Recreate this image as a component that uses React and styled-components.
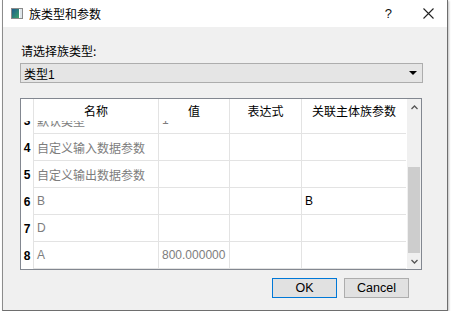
import React from 'react';
import styled, { createGlobalStyle } from 'styled-components';

const GlobalStyle = createGlobalStyle`
    body {
        margin: 0;
        background: #fff;
        font-family: "Liberation Sans", "Noto Sans CJK SC", sans-serif;
    }
`;

const columns = [
    { key: 'name', title: '名称', width: 125 },
    { key: 'value', title: '值', width: 71 },
    { key: 'expr', title: '表达式', width: 72 },
    { key: 'assoc', title: '关联主体族参数', width: 104 },
];

const rows = [
    { num: 3, name: '默认类型', value: '1', partial: true },
    { num: 4, name: '自定义输入数据参数' },
    { num: 5, name: '自定义输出数据参数' },
    { num: 6, name: 'B', assoc: 'B' },
    { num: 7, name: 'D' },
    { num: 8, name: 'A', value: '800.000000' },
];

const TitleIcon = () => (
    <svg width="12" height="11" viewBox="0 0 12 11">
        <defs>
            <linearGradient id="ti" x1="0" y1="0" x2="1" y2="1">
                <stop offset="0" stopColor="#1d5a8c" />
                <stop offset="1" stopColor="#3aa36a" />
            </linearGradient>
        </defs>
        <rect x="0.5" y="0.5" width="11" height="10" fill="#fff" stroke="#8a8a8a" />
        <rect x="1" y="1" width="7" height="9" fill="url(#ti)" />
        <rect x="9" y="1" width="2" height="9" fill="#dfe6ea" />
    </svg>
);

const CloseIcon = () => (
    <svg width="11" height="11" viewBox="0 0 11 11">
        <path d="M0.5 0.5 L10.5 10.5 M10.5 0.5 L0.5 10.5" stroke="#222" strokeWidth="1.1" />
    </svg>
);

const Chevron = ({ down }) => (
    <svg width="7" height="5" viewBox="0 0 7 5">
        <path d={down ? 'M0.5 1 L3.5 4 L6.5 1' : 'M0.5 4 L3.5 1 L6.5 4'} stroke="#555" strokeWidth="1.3" fill="none" />
    </svg>
);

const App = () => {
    return (
        <>
            <GlobalStyle />
            <Window>
                <TitleBar>
                    <TitleIcon />
                    <Title>族类型和参数</Title>
                    <Help>?</Help>
                    <Close><CloseIcon /></Close>
                </TitleBar>
                <Body>
                    <Label>请选择族类型:</Label>
                    <Combo>
                        <span>类型1</span>
                        <Arrow />
                    </Combo>
                    <Table>
                        <TableMain>
                            <HeaderRow>
                                <Corner />
                                {columns.map(c => (
                                    <HeaderCell key={c.key} $w={c.width}>{c.title}</HeaderCell>
                                ))}
                            </HeaderRow>
                            <Rows>
                                {rows.map(r => (
                                    <Row key={r.num} $partial={r.partial}>
                                        <RowNum>{r.num}</RowNum>
                                        {columns.map(c => (
                                            <Cell key={c.key} $w={c.width} $dark={c.key === 'assoc'}>
                                                {r[c.key]}
                                            </Cell>
                                        ))}
                                    </Row>
                                ))}
                            </Rows>
                        </TableMain>
                        <ScrollBar>
                            <ScrollBtn><Chevron /></ScrollBtn>
                            <Track><Thumb /></Track>
                            <ScrollBtn><Chevron down /></ScrollBtn>
                        </ScrollBar>
                    </Table>
                    <Buttons>
                        <Button $primary>OK</Button>
                        <Button>Cancel</Button>
                    </Buttons>
                </Body>
            </Window>
        </>
    );
};

const Window = styled.div`
    box-sizing: border-box;
    margin-left: 2px;
    width: 446px;
    height: 311px;
    border: 1px solid #8c8c8c;
    border-top: none;
    border-right-color: #6e6e6e;
    border-bottom-color: #6e6e6e;
    background: #f0f0f0;
    box-shadow: 1px 1px 2px rgba(0, 0, 0, 0.25);
    display: flex;
    flex-direction: column;
`;

const TitleBar = styled.div`
    height: 27px;
    background: #fff;
    display: flex;
    align-items: center;
    padding-left: 8px;
    padding-right: 13px;
`;

const Title = styled.div`
    margin-left: 6px;
    font-size: 12px;
    font-family: "Noto Sans CJK SC", sans-serif;
    color: #000;
    flex: 1;
`;

const Help = styled.div`
    font-size: 13px;
    font-family: "Liberation Sans", sans-serif;
    color: #111;
    margin-right: 31px;
`;

const Close = styled.div`
    display: flex;
    align-items: center;
`;

const Body = styled.div`
    flex: 1;
    display: flex;
    flex-direction: column;
    padding: 16px 24px 0 17px;
`;

const Label = styled.div`
    font-size: 12px;
    line-height: 16px;
    font-family: "Noto Sans CJK SC", sans-serif;
    color: #000;
    padding-left: 1px;
`;

const Combo = styled.div`
    box-sizing: border-box;
    margin-top: 4px;
    height: 20px;
    border: 1px solid #adadad;
    background: #e5e5e5;
    display: flex;
    align-items: center;
    justify-content: space-between;
    padding: 0 5px 0 3px;
    font-size: 12px;
    font-family: "Liberation Sans", "Noto Sans CJK SC", sans-serif;
    color: #000;
`;

const Arrow = styled.div`
    width: 0;
    height: 0;
    border-left: 4px solid transparent;
    border-right: 4px solid transparent;
    border-top: 4px solid #000;
`;

const Table = styled.div`
    margin-top: 15px;
    width: 402px;
    height: 172px;
    box-sizing: border-box;
    border: 1px solid #828790;
    background: #fff;
    display: flex;
`;

const TableMain = styled.div`
    display: flex;
    flex-direction: column;
    width: 385px;
`;

const HeaderRow = styled.div`
    display: flex;
    height: 22px;
    flex-shrink: 0;
`;

const Corner = styled.div`
    width: 13px;
    border-right: 1px solid #e3e3e3;
    box-sizing: border-box;
`;

const HeaderCell = styled.div`
    box-sizing: border-box;
    width: ${p => p.$w}px;
    border-right: 1px solid #e3e3e3;
    display: flex;
    align-items: center;
    justify-content: center;
    font-size: 12px;
    font-family: "Noto Sans CJK SC", sans-serif;
    color: #000;
    &:last-child { border-right: none; }
`;

const Rows = styled.div`
    flex: 1;
    overflow: hidden;
`;

const Row = styled.div`
    display: flex;
    height: 27px;
    box-sizing: border-box;
    margin-top: ${p => (p.$partial ? '-14px' : '0')};
`;

const RowNum = styled.div`
    box-sizing: border-box;
    width: 13px;
    border-right: 1px solid #e3e3e3;
    display: flex;
    align-items: center;
    justify-content: center;
    font-size: 12px;
    font-weight: bold;
    font-family: "Liberation Sans", sans-serif;
    color: #000;
`;

const Cell = styled.div`
    box-sizing: border-box;
    width: ${p => p.$w}px;
    border-right: 1px solid #e3e3e3;
    border-bottom: 1px solid #e3e3e3;
    display: flex;
    align-items: center;
    padding-left: 3px;
    font-size: 12px;
    font-family: "Liberation Sans", "Noto Sans CJK SC", sans-serif;
    color: ${p => (p.$dark ? '#000' : '#7d7d7d')};
    white-space: nowrap;
    overflow: hidden;
    &:last-child { border-right: none; }
`;

const ScrollBar = styled.div`
    width: 15px;
    margin-left: 1px;
    background: #f0f0f0;
    display: flex;
    flex-direction: column;
`;

const ScrollBtn = styled.div`
    height: 16px;
    display: flex;
    align-items: center;
    justify-content: center;
    flex-shrink: 0;
`;

const Track = styled.div`
    flex: 1;
    display: flex;
    flex-direction: column;
    justify-content: flex-end;
`;

const Thumb = styled.div`
    height: 86px;
    margin: 0 1px;
    background: #cdcdcd;
`;

const Buttons = styled.div`
    margin-top: 8px;
    display: flex;
    justify-content: flex-end;
    gap: 7px;
    padding-right: 14px;
`;

const Button = styled.div`
    box-sizing: border-box;
    width: 65px;
    height: 20px;
    border: 1px solid ${p => (p.$primary ? '#0078d7' : '#adadad')};
    background: #e1e1e1;
    display: flex;
    align-items: center;
    justify-content: center;
    font-size: 12.5px;
    font-family: "Liberation Sans", sans-serif;
    color: #000;
`;

export default App;
